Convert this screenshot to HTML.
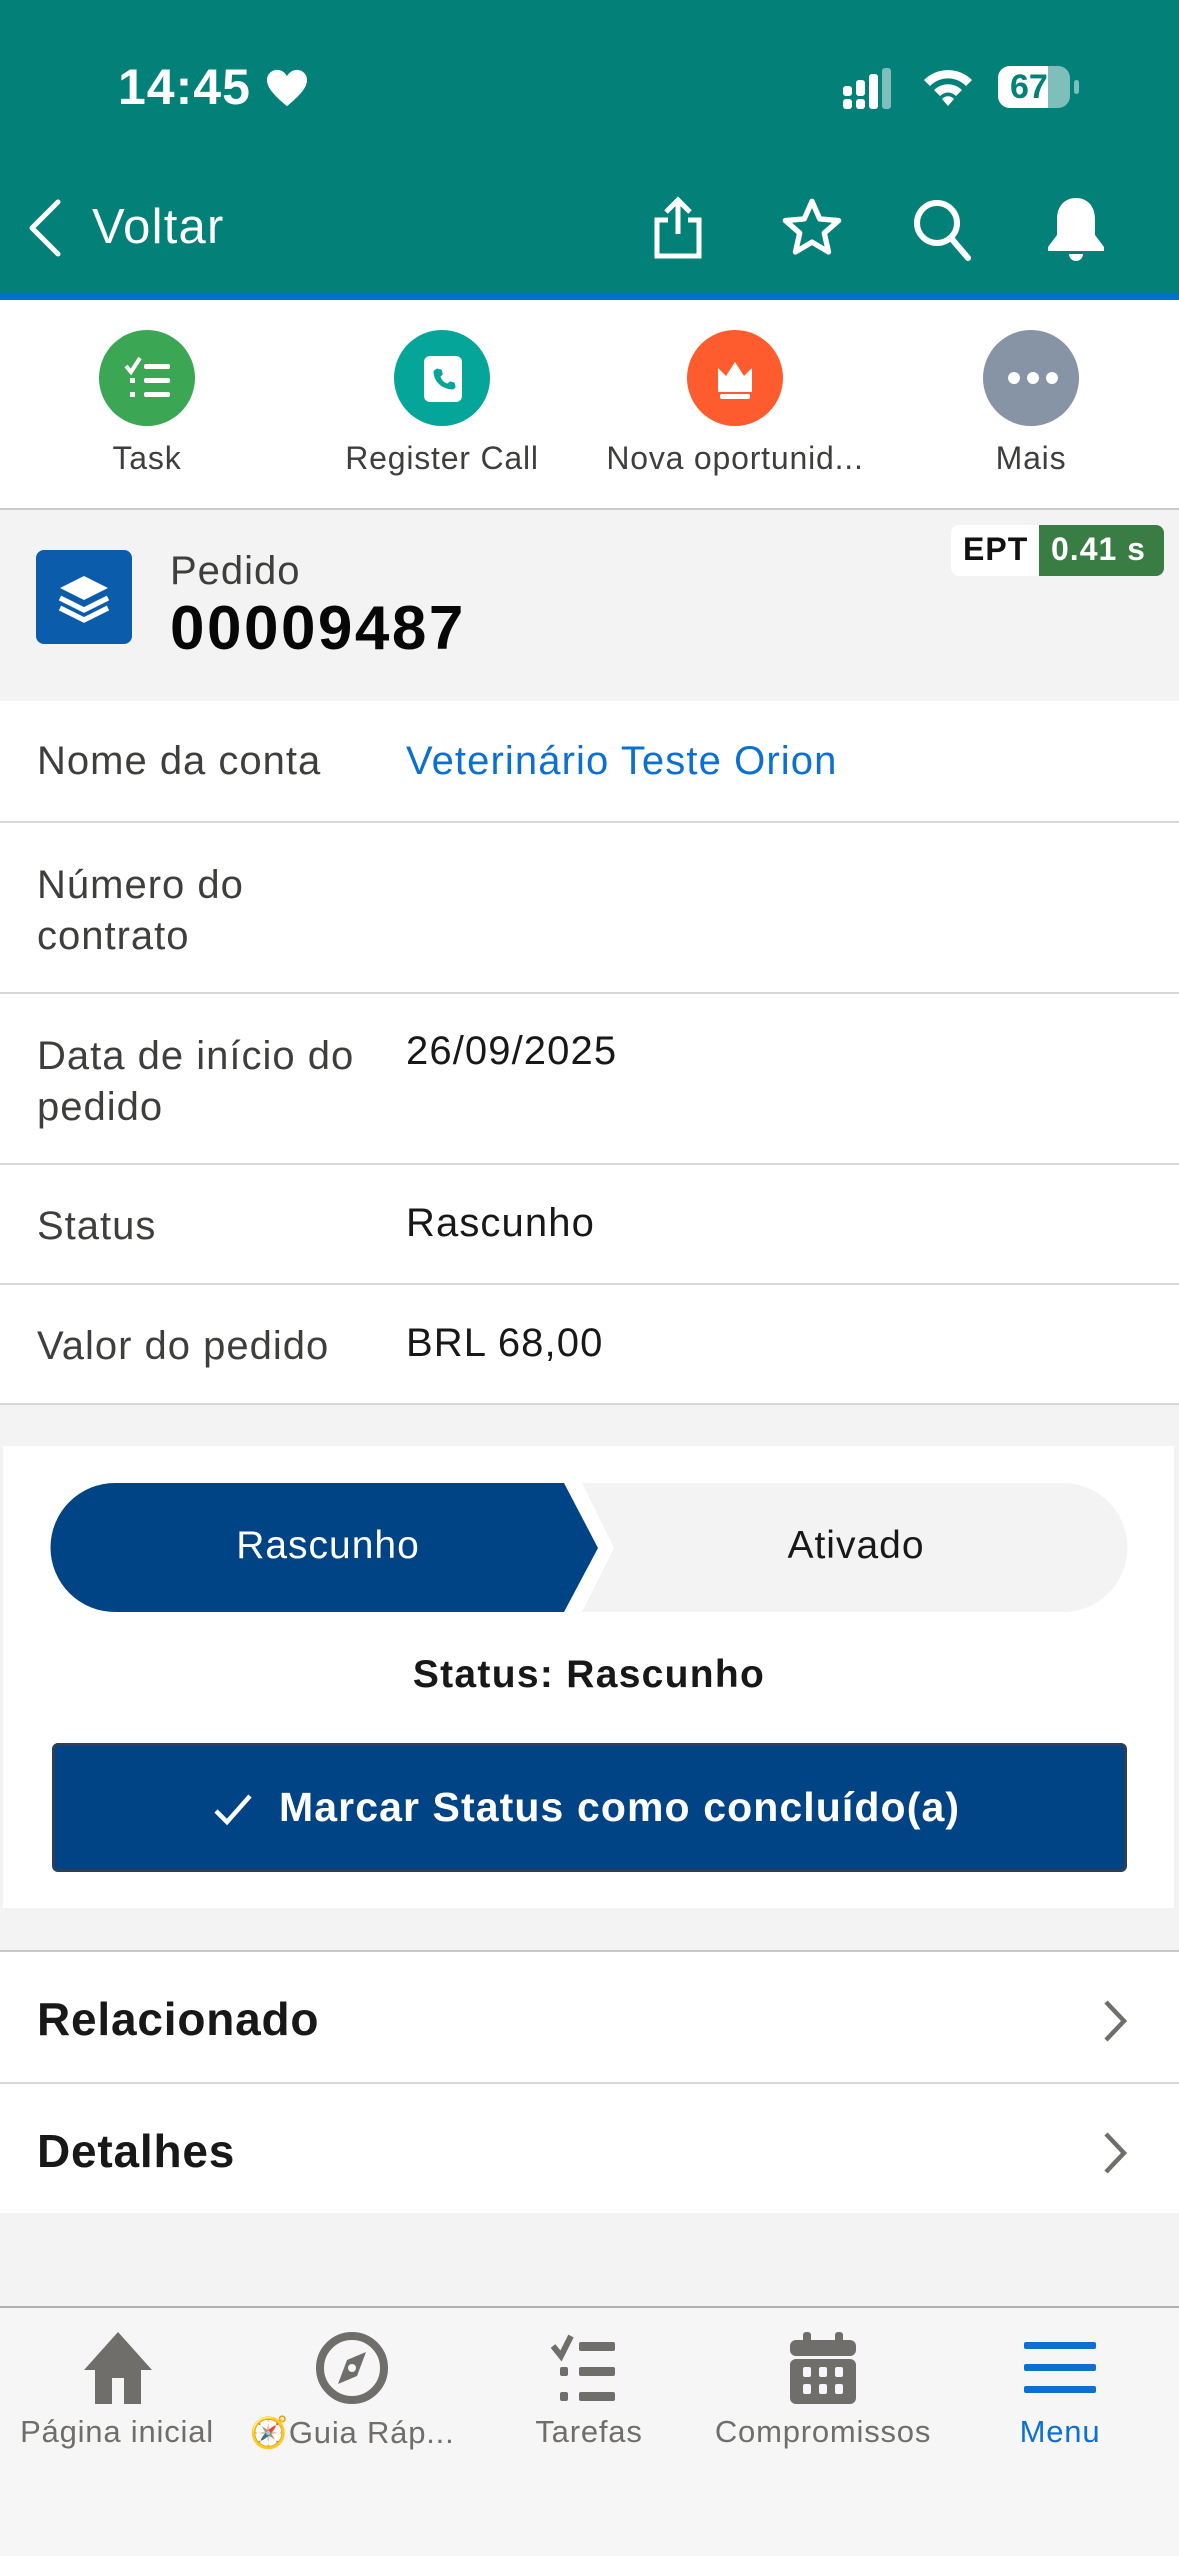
<!DOCTYPE html>
<html><head><meta charset="utf-8"><style>
*{margin:0;padding:0;box-sizing:border-box}
body{width:1179px;height:2556px;position:relative;background:#f3f3f3;font-family:"Liberation Sans",sans-serif;overflow:hidden;color:#181818}
.a{position:absolute}
.t{position:absolute;white-space:nowrap}
.lbl{font-size:40px;color:#3e3e3c;left:37px;letter-spacing:1px}
.val{font-size:40px;color:#181818;left:406px;letter-spacing:1.1px}
.row{position:absolute;left:0;width:1179px;background:#fff;border-bottom:2px solid #d8d8d8}
.tab{position:absolute;font-size:31px;color:#706e6b;transform:translateX(-50%);top:2414px;letter-spacing:.8px}
.act{position:absolute;font-size:32px;color:#3e3e3c;transform:translateX(-50%);top:440px;letter-spacing:.8px}
</style></head><body>
<div class="a" style="left:0;top:0;width:1179px;height:294px;background:#038078"></div>
<div class="a" style="left:0;top:294px;width:1179px;height:6px;background:#0070d2"></div>
<div class="t" style="left:118px;top:58px;font-size:50px;font-weight:bold;color:#fff;letter-spacing:1px">14:45</div>
<svg class="a" style="left:265px;top:68px" width="44" height="40" viewBox="0 0 24 22"><path d="M12 21C5 15 1 11 1 6.5 1 3.5 3.5 1 6.5 1 9 1 11 2.5 12 4.5 13 2.5 15 1 17.5 1 20.5 1 23 3.5 23 6.5 23 11 19 15 12 21Z" fill="#fff"/></svg>
<svg class="a" style="left:843px;top:68px" width="62" height="42"><rect x="0" y="18" width="9" height="10" rx="3" fill="#fff"/><rect x="0" y="31" width="9" height="10" rx="3" fill="#fff"/><rect x="13" y="12" width="9" height="16" rx="3" fill="#fff"/><rect x="13" y="31" width="9" height="10" rx="3" fill="#fff"/><rect x="26" y="6" width="9" height="35" rx="3" fill="#fff"/><rect x="39" y="0" width="9" height="41" rx="3" fill="#7fbfbb"/></svg>
<svg class="a" style="left:922px;top:66px" width="52" height="42" viewBox="0 0 26 21"><path d="M1 7a17 17 0 0 1 24 0l-3 3a12.5 12.5 0 0 0-18 0zM6 12a10 10 0 0 1 14 0l-3 3a5.5 5.5 0 0 0-8 0zM10 16.5a4 4 0 0 1 6 0L13 20z" fill="#fff"/></svg>
<div class="a" style="left:998px;top:66px;width:72px;height:42px;border-radius:12px;background:#7fbfbb;overflow:hidden"><div style="width:50px;height:42px;background:#fff"></div></div>
<div class="t" style="left:1010px;top:68px;font-size:34px;font-weight:bold;color:#038078">67</div>
<div class="a" style="left:1074px;top:80px;width:5px;height:14px;border-radius:3px;background:#7fbfbb"></div>
<svg class="a" style="left:24px;top:198px" width="40" height="60"><path d="M34 4 8 30l26 26" fill="none" stroke="#fff" stroke-width="5" stroke-linecap="round" stroke-linejoin="round"/></svg>
<div class="t" style="left:92px;top:199px;font-size:49px;color:#fff;letter-spacing:1.2px">Voltar</div>
<svg class="a" style="left:650px;top:196px" width="56" height="64"><path d="M28 4v34M16 16 28 4l12 12" fill="none" stroke="#fff" stroke-width="5"/><path d="M18 24H7v36h42V24H38" fill="none" stroke="#fff" stroke-width="5"/></svg>
<svg class="a" style="left:780px;top:196px" width="64" height="64" viewBox="0 0 24 24"><path d="M12 2l2.9 6.6 7.1.6-5.4 4.7 1.6 7.1L12 17.3 5.8 21l1.6-7.1L2 9.2l7.1-.6z" fill="none" stroke="#fff" stroke-width="2" stroke-linejoin="round"/></svg>
<svg class="a" style="left:910px;top:196px" width="66" height="66"><circle cx="27" cy="27" r="20" fill="none" stroke="#fff" stroke-width="6"/><path d="M41 42l17 20" stroke="#fff" stroke-width="6" stroke-linecap="round"/></svg>
<svg class="a" style="left:1043px;top:196px" width="66" height="70"><path d="M33 2c-12 0-19 9-19 21v16l-9 12v4h56v-4l-9-12V23C52 11 45 2 33 2z" fill="#fff"/><path d="M26 58a7 7 0 0 0 14 0z" fill="#fff"/></svg>
<div class="a" style="left:0;top:300px;width:1179px;height:210px;background:#fff;border-bottom:2px solid #c9c9c9"></div>
<div class="a" style="left:99px;top:330px;width:96px;height:96px;border-radius:50%;background:#3ba755"></div>
<svg class="a" style="left:124px;top:356px" width="48" height="46"><path d="M2 10l5 6 9-14" fill="none" stroke="#fff" stroke-width="4"/><rect x="20" y="8" width="26" height="5" rx="2" fill="#fff"/><rect x="20" y="22" width="26" height="5" rx="2" fill="#fff"/><rect x="20" y="36" width="26" height="5" rx="2" fill="#fff"/><rect x="6" y="22" width="5" height="5" fill="#fff"/><rect x="6" y="36" width="5" height="5" fill="#fff"/></svg>
<div class="a" style="left:394px;top:330px;width:96px;height:96px;border-radius:50%;background:#06a59a"></div>
<div class="a" style="left:424px;top:356px;width:38px;height:46px;border-radius:6px;background:#fff"></div>
<svg class="a" style="left:430px;top:362px" width="28" height="34" viewBox="0 0 24 24"><path d="M6 3l4 1 1 4-2 2c1 3 3 5 6 6l2-2 4 1 1 4-2 2C10 21 3 14 3 5z" fill="#06a59a"/></svg>
<div class="a" style="left:687px;top:330px;width:96px;height:96px;border-radius:50%;background:#fe5c2f"></div>
<svg class="a" style="left:710px;top:356px" width="50" height="46"><path d="M8 12l8 8 9-14 9 14 8-8v24H8z" fill="#fff"/><rect x="10" y="38" width="30" height="5" rx="2" fill="#fff"/></svg>
<div class="a" style="left:983px;top:330px;width:96px;height:96px;border-radius:50%;background:#8694a6"></div>
<div class="a" style="left:1008px;top:372px;width:12px;height:12px;border-radius:50%;background:#fff;box-shadow:19px 0 #fff,38px 0 #fff"></div>
<div class="act" style="left:147px">Task</div>
<div class="act" style="left:442px">Register Call</div>
<div class="act" style="left:735px">Nova oportunid...</div>
<div class="act" style="left:1031px">Mais</div>
<div class="a" style="left:36px;top:550px;width:96px;height:94px;border-radius:8px;background:#0b5cab"></div>
<svg class="a" style="left:52px;top:566px" width="64" height="64" viewBox="0 0 32 32"><path d="M16 5 28 11 16 17 4 11z" fill="#fff"/><path d="M4 16l12 6 12-6M4 21l12 6 12-6" fill="none" stroke="#fff" stroke-width="2.6"/></svg>
<div class="t" style="left:170px;top:549px;font-size:40px;color:#3e3e3c;letter-spacing:1px">Pedido</div>
<div class="t" style="left:170px;top:593px;font-size:62px;font-weight:bold;color:#080707;letter-spacing:2.5px">00009487</div>
<div class="a" style="left:951px;top:525px;width:213px;height:51px;border-radius:8px;background:#fff;overflow:hidden"><div class="a" style="left:88px;top:0;width:125px;height:51px;background:#3a7d44"></div></div>
<div class="t" style="left:963px;top:531px;font-size:32px;font-weight:bold;color:#111;letter-spacing:1px">EPT</div>
<div class="t" style="left:1051px;top:531px;font-size:32px;font-weight:bold;color:#fff;letter-spacing:1px">0.41 s</div>
<div class="row" style="top:701px;height:122px"></div>
<div class="t lbl" style="top:739px">Nome da conta</div>
<div class="t val" style="top:739px;color:#0b6fd3">Veterinário Teste Orion</div>
<div class="row" style="top:823px;height:171px"></div>
<div class="t lbl" style="top:860px;line-height:51px">Número do<br>contrato</div>
<div class="row" style="top:994px;height:171px"></div>
<div class="t lbl" style="top:1031px;line-height:51px">Data de início do<br>pedido</div>
<div class="t val" style="top:1029px">26/09/2025</div>
<div class="row" style="top:1165px;height:120px"></div>
<div class="t lbl" style="top:1204px">Status</div>
<div class="t val" style="top:1201px">Rascunho</div>
<div class="row" style="top:1285px;height:120px"></div>
<div class="t lbl" style="top:1324px">Valor do pedido</div>
<div class="t val" style="top:1321px">BRL 68,00</div>
<div class="a" style="left:3px;top:1446px;width:1171px;height:462px;background:#fff"></div>
<svg class="a" style="left:0;top:1480px" width="1179" height="135"><path d="M115 3H564L598 68 564 132H115A64 64 0 0 1 115 3Z" fill="#014486"/><path d="M582 3H1063A64 64 0 0 1 1063 132H582L614 68Z" fill="#f3f3f3"/></svg>
<div class="t" style="left:328px;top:1524px;font-size:39px;color:#fff;transform:translateX(-50%);letter-spacing:1px">Rascunho</div>
<div class="t" style="left:856px;top:1524px;font-size:39px;color:#181818;transform:translateX(-50%);letter-spacing:1px">Ativado</div>
<div class="t" style="left:589px;top:1653px;font-size:39px;font-weight:bold;transform:translateX(-50%);letter-spacing:1.3px">Status: Rascunho</div>
<div class="a" style="left:52px;top:1743px;width:1075px;height:129px;background:#014486;border:3px solid #2a3f58;border-radius:6px"></div>
<svg class="a" style="left:213px;top:1792px" width="40" height="36"><path d="M3 19l11 11L37 4" fill="none" stroke="#fff" stroke-width="4.5"/></svg>
<div class="t" style="left:279px;top:1784px;font-size:41px;font-weight:bold;color:#fff;letter-spacing:1.1px">Marcar Status como concluído(a)</div>
<div class="a" style="left:0;top:1950px;width:1179px;height:263px;background:#fff;border-top:2px solid #c9c9c9"></div>
<div class="a" style="left:0;top:2082px;width:1179px;height:2px;background:#d8d8d8"></div>
<div class="t" style="left:37px;top:1992px;font-size:46px;font-weight:bold;letter-spacing:.8px">Relacionado</div>
<div class="t" style="left:37px;top:2124px;font-size:46px;font-weight:bold;letter-spacing:.8px">Detalhes</div>
<svg class="a" style="left:1100px;top:1998px" width="30" height="46"><path d="M6 4l18 19L6 42" fill="none" stroke="#706e6b" stroke-width="4.5"/></svg>
<svg class="a" style="left:1100px;top:2130px" width="30" height="46"><path d="M6 4l18 19L6 42" fill="none" stroke="#706e6b" stroke-width="4.5"/></svg>
<div class="a" style="left:0;top:2306px;width:1179px;height:250px;background:#f6f6f6;border-top:2px solid #b0b0b0"></div>
<svg class="a" style="left:80px;top:2330px" width="76" height="76"><path d="M38 2 4 40h11v34h17V48h12v26h17V40h11z" fill="#706e6b"/></svg>
<svg class="a" style="left:314px;top:2330px" width="76" height="76"><circle cx="38" cy="38" r="32" fill="none" stroke="#706e6b" stroke-width="8"/><path d="M52 22 43 46 24 54 33 30z" fill="#706e6b"/><circle cx="38" cy="38" r="4" fill="#f6f6f6"/></svg>
<svg class="a" style="left:551px;top:2330px" width="76" height="76"><path d="M2 16l8 10 10-20" fill="none" stroke="#706e6b" stroke-width="6"/><rect x="28" y="12" width="36" height="9" rx="2" fill="#706e6b"/><rect x="28" y="37" width="36" height="9" rx="2" fill="#706e6b"/><rect x="28" y="62" width="36" height="9" rx="2" fill="#706e6b"/><rect x="9" y="37" width="8" height="9" rx="2" fill="#706e6b"/><rect x="9" y="62" width="8" height="9" rx="2" fill="#706e6b"/></svg>
<svg class="a" style="left:785px;top:2330px" width="76" height="76"><rect x="5" y="10" width="66" height="16" rx="6" fill="#706e6b"/><rect x="18" y="2" width="8" height="14" rx="3" fill="#706e6b"/><rect x="50" y="2" width="8" height="14" rx="3" fill="#706e6b"/><rect x="5" y="29" width="66" height="45" rx="6" fill="#706e6b"/><g fill="#f6f6f6"><rect x="18" y="37" width="8" height="10" rx="2"/><rect x="34" y="37" width="8" height="10" rx="2"/><rect x="50" y="37" width="8" height="10" rx="2"/><rect x="18" y="54" width="8" height="10" rx="2"/><rect x="34" y="54" width="8" height="10" rx="2"/><rect x="50" y="54" width="8" height="10" rx="2"/></g></svg>
<svg class="a" style="left:1022px;top:2334px" width="76" height="66"><rect x="2" y="8" width="72" height="7" rx="2" fill="#0b6fd3"/><rect x="2" y="30" width="72" height="7" rx="2" fill="#0b6fd3"/><rect x="2" y="52" width="72" height="7" rx="2" fill="#0b6fd3"/></svg>
<div class="tab" style="left:117px">Página inicial</div>
<div class="tab" style="left:352px">🧭Guia Ráp...</div>
<div class="tab" style="left:589px">Tarefas</div>
<div class="tab" style="left:823px">Compromissos</div>
<div class="tab" style="left:1060px;color:#0b6fd3">Menu</div>
</body></html>
